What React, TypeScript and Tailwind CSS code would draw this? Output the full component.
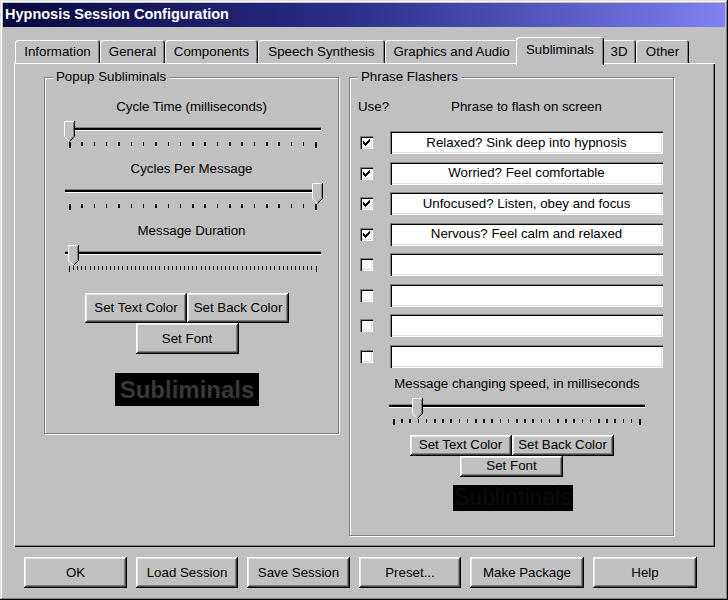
import type React from "react"

const raised =
  "shadow-[inset_-1px_-1px_0_#000,inset_1px_1px_0_#fff,inset_-2px_-2px_0_#404040,inset_2px_2px_0_#e8e8e8,inset_-3px_-3px_0_#808080]"
const sunken =
  "shadow-[inset_1px_1px_0_#808080,inset_2px_2px_0_#000,inset_-1px_-1px_0_#fff,inset_-2px_-2px_0_#dfdfdf]"

const tabs = [
  { label: "Information", w: "w-[85px]" },
  { label: "General", w: "w-[65px]" },
  { label: "Components", w: "w-[93px]" },
  { label: "Speech Synthesis", w: "w-[127px]" },
  { label: "Graphics and Audio", w: "w-[133px]" },
  { label: "Subliminals", w: "w-[88px]", active: true },
  { label: "3D", w: "w-[34px]" },
  { label: "Other", w: "w-[53px]" },
]

const phrases = [
  "Relaxed? Sink deep into hypnosis",
  "Worried? Feel comfortable",
  "Unfocused? Listen, obey and focus",
  "Nervous? Feel calm and relaxed",
  "",
  "",
  "",
  "",
]

function Button({ className, children }: { className: string; children: React.ReactNode }) {
  return (
    <div className={`flex items-center justify-center bg-[#c0c0c0] leading-none ${raised} ${className}`}>
      {children}
    </div>
  )
}

function GroupBox({ title, className, children }: { title: string; className: string; children: React.ReactNode }) {
  return (
    <div className={`relative border border-[#808080] shadow-[inset_1px_1px_0_#fff,1px_1px_0_#fff] ${className}`}>
      <span className="absolute -top-[9px] left-[8px] bg-[#c0c0c0] px-[3px] leading-[16px]">{title}</span>
      {children}
    </div>
  )
}

function Slider({ ticks, value, className }: { ticks: number; value: number; className: string }) {
  // thumb centre runs along the tick range
  const left = 4 + value * 248 - 5.5
  const tick = ticks > 40 ? "w-px" : "w-[1.5px]"
  return (
    <div className={`relative h-[27px] w-[256px] ${className}`}>
      <div className="absolute left-0 right-0 top-[6px] h-[4px] border-t border-b border-t-[#808080] border-b-white bg-black" />
      <div className="absolute left-[4px] right-[4px] top-[21px] flex items-start justify-between">
        {Array.from({ length: ticks }).map((_, i) => (
          <div key={i} className={`bg-[#111] ${tick} ${i === 0 || i === ticks - 1 ? "h-[6px]" : "h-[4px]"}`} />
        ))}
      </div>
      <svg width="11" height="21" viewBox="0 0 11 21" className="absolute top-0" style={{ left }}>
        <path d="M0 0H11V15.5L5.5 21L0 15.5Z" fill="#c0c0c0" />
        <path d="M0.5 15.5V0.5H10" stroke="#fff" fill="none" />
        <path d="M0.5 15.5L5 20" stroke="#fff" fill="none" />
        <path d="M10.5 0V15.5L5.5 20.5" stroke="#000" fill="none" />
        <path d="M9.5 1.5V15L5.5 19" stroke="#808080" fill="none" />
      </svg>
    </div>
  )
}

function CheckBox({ checked }: { checked: boolean }) {
  return (
    <div className={`relative h-[13px] w-[13px] bg-white ${sunken}`}>
      {checked && (
        <svg width="7" height="7" viewBox="0 0 7 7" className="absolute left-[3px] top-[3px]" shapeRendering="crispEdges">
          <rect x="6" y="0" width="1" height="1" />
          <rect x="5" y="1" width="2" height="1" />
          <rect x="0" y="2" width="1" height="1" />
          <rect x="4" y="2" width="3" height="1" />
          <rect x="0" y="3" width="2" height="1" />
          <rect x="3" y="3" width="3" height="1" />
          <rect x="0" y="4" width="5" height="1" />
          <rect x="1" y="5" width="3" height="1" />
          <rect x="2" y="6" width="1" height="1" />
        </svg>
      )}
    </div>
  )
}

export default function App() {
  return (
    <div className="h-[600px] w-[728px] overflow-hidden bg-[#c0c0c0] p-[3px] font-['Liberation_Sans',Arial,sans-serif] text-[13.3px] text-black shadow-[inset_-1px_-1px_0_#000,inset_1px_1px_0_#dfdfdf,inset_-2px_-2px_0_#808080,inset_2px_2px_0_#fff]">
      {/* title bar */}
      <div className="flex h-[24px] items-center bg-linear-to-r from-[#08083e] via-[#30308e] to-[#8080f2] pl-[2px] text-[14.5px] font-bold text-white">
        Hypnosis Session Configuration
      </div>

      {/* tabs */}
      <div className="ml-[11px] mt-[10px] flex h-[26px] items-end pl-[1px]">
        {tabs.map((t) =>
          t.active ? (
            <div
              key={t.label}
              className={`relative z-10 -mx-[2px] -mb-[2px] flex h-[28px] items-center justify-center rounded-t-[3px] bg-[#c0c0c0] pb-[3px] shadow-[inset_1px_1px_0_#fff,inset_-1px_0_0_#000,inset_-2px_0_0_#808080] ${t.w}`}
            >
              {t.label}
            </div>
          ) : (
            <div
              key={t.label}
              className={`flex h-[23px] items-center justify-center rounded-t-[3px] bg-[#c0c0c0] shadow-[inset_1px_1px_0_#fff,inset_-1px_0_0_#000,inset_-2px_0_0_#808080] ${t.w}`}
            >
              {t.label}
            </div>
          )
        )}
      </div>

      {/* tab page */}
      <div className="ml-[11px] flex h-[484px] w-[701px] items-start gap-[10px] pl-[30px] pt-[14px] shadow-[inset_1px_1px_0_#fff,inset_-1px_-1px_0_#000,inset_-2px_-2px_0_#808080]">
        <GroupBox title="Popup Subliminals" className="h-[357px] w-[295px]">
          <div className="flex flex-col items-center pt-[21px]">
            <div className="leading-[15px]">Cycle Time (milliseconds)</div>
            <Slider ticks={21} value={0} className="ml-[3px] mt-[7px]" />
            <div className="mt-[13px] leading-[15px]">Cycles Per Message</div>
            <Slider ticks={21} value={1} className="ml-[3px] mt-[7px]" />
            <div className="mt-[13px] leading-[15px]">Message Duration</div>
            <Slider ticks={61} value={1 / 60} className="ml-[3px] mt-[7px]" />
            <div className="mr-[9px] mt-[21px] flex flex-col items-center">
              <div className="flex">
                <Button className="h-[30px] w-[102px]">Set Text Color</Button>
                <Button className="h-[30px] w-[102px]">Set Back Color</Button>
              </div>
              <Button className="h-[31px] w-[103px]">Set Font</Button>
            </div>
            <div className="mr-[9px] mt-[19px] flex h-[33px] w-[144px] items-center justify-center bg-black text-[24px] font-bold leading-none text-[#383838]">
              Subliminals
            </div>
          </div>
        </GroupBox>

        <GroupBox title="Phrase Flashers" className="h-[459px] w-[325px]">
          <div className="flex flex-col pt-[21px]">
            <div className="flex leading-[15px]">
              <span className="ml-[8px] w-[32px]">Use?</span>
              <span className="w-[273px] text-center">Phrase to flash on screen</span>
            </div>
            <div className="mt-[17px] flex flex-col gap-[7.5px]">
              {phrases.map((p, i) => (
                <div key={i} className="flex h-[23px] items-center">
                  <div className="ml-[10px]">
                    <CheckBox checked={p !== ""} />
                  </div>
                  <div className={`ml-[17px] flex h-[23px] w-[273px] items-center justify-center bg-white leading-none ${sunken}`}>
                    {p}
                  </div>
                </div>
              ))}
            </div>
            <div className="flex flex-col items-center">
              <div className="ml-[11px] mt-[8px] leading-[15px]">Message changing speed, in milliseconds</div>
              <Slider ticks={31} value={0.1} className="ml-[11px] mt-[7px]" />
              <div className="mt-[10px] flex flex-col items-center">
                <div className="flex">
                  <Button className="h-[21px] w-[102px]">Set Text Color</Button>
                  <Button className="h-[21px] w-[102px]">Set Back Color</Button>
                </div>
                <Button className="h-[21px] w-[103px]">Set Font</Button>
              </div>
              <div className="ml-[3px] mt-[8px] flex h-[26px] w-[120px] items-center justify-center bg-black text-[23px] leading-none text-[#0c0c0c]">
                Subliminals
              </div>
            </div>
          </div>
        </GroupBox>
      </div>

      {/* dialog buttons */}
      <div className="ml-[21px] mt-[10px] flex gap-[9px]">
        <Button className="h-[31px] w-[103px]">OK</Button>
        <Button className="h-[31px] w-[102px]">Load Session</Button>
        <Button className="h-[31px] w-[103px]">Save Session</Button>
        <Button className="h-[31px] w-[102px]">Preset...</Button>
        <Button className="h-[31px] w-[114px]">Make Package</Button>
        <Button className="h-[31px] w-[104px]">Help</Button>
      </div>
    </div>
  )
}
